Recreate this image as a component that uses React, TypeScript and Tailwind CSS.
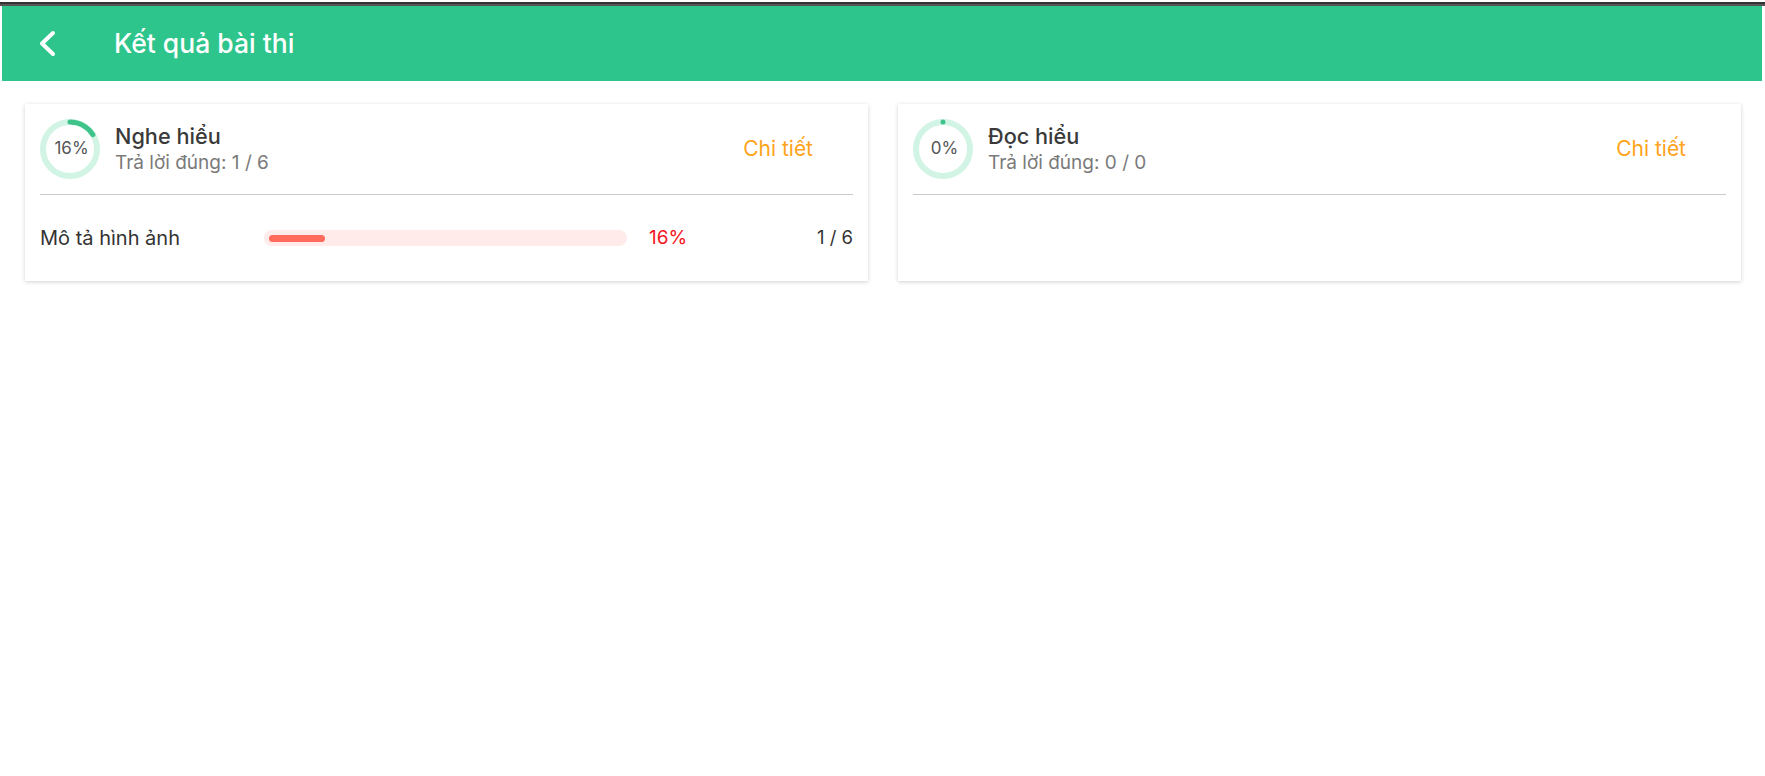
interface Part {
    title: string
    correct: number
    total: number
    rows: { label: string; correct: number; total: number }[]
}

const parts: Part[] = [
    {
        title: 'Nghe hiểu',
        correct: 1,
        total: 6,
        rows: [{ label: 'Mô tả hình ảnh', correct: 1, total: 6 }],
    },
    { title: 'Đọc hiểu', correct: 0, total: 0, rows: [] },
]

function percent(correct: number, total: number) {
    return total ? Math.floor((correct / total) * 100) : 0
}

function Ring({ value }: { value: number }) {
    const r = 27
    const c = 2 * Math.PI * r
    return (
        <div className="relative w-[60px] h-[60px] shrink-0">
            <svg width="60" height="60" viewBox="0 0 60 60" className="-rotate-90">
                <circle cx="30" cy="30" r={r} fill="none" stroke="#d2f4e5" strokeWidth="6" />
                <circle
                    cx="30"
                    cy="30"
                    r={r}
                    fill="none"
                    stroke="#3ec48b"
                    strokeWidth="5"
                    strokeLinecap="round"
                    strokeDasharray={`${(value / 100) * c} ${c}`}
                />
            </svg>
            <span className="absolute inset-0 pl-[3px] flex items-center justify-center text-[17px] text-[#555]">
                {value}%
            </span>
        </div>
    )
}

function PartCard({ part }: { part: Part }) {
    const value = percent(part.correct, part.total)
    return (
        <div className="bg-white px-[15px] shadow-[0_1px_4px_rgba(0,0,0,0.18)]">
            <div className="flex items-center pt-[15px] pb-[15px] border-b border-[#cacaca]">
                <Ring value={value} />
                <div className="ml-[15px] flex-1">
                    <div className="text-[21.7px] leading-[28px] font-medium text-[#3a3a3a]">{part.title}</div>
                    <div className="text-[19px] leading-[26px] text-[#7a7a7a]">
                        Trả lời đúng: {part.correct} / {part.total}
                    </div>
                </div>
                <button className="mr-[40px] text-[21px] text-[#ffa31a]">Chi tiết</button>
            </div>

            {part.rows.map((row) => {
                const p = percent(row.correct, row.total)
                return (
                    <div key={row.label} className="flex items-center h-[86px]">
                        <div className="w-[224px] text-[20px] text-[#333]">{row.label}</div>
                        <div className="w-[363px] h-[16px] rounded-full bg-[#ffecea] p-[4.5px]">
                            <div
                                className="h-full rounded-full bg-[#ff6a5c]"
                                style={{ width: `${p}%` }}
                            />
                        </div>
                        <div className="ml-[22px] text-[19px] text-[#f5141c]">{p}%</div>
                        <div className="flex-1 text-right text-[18.5px] text-[#333]">
                            {row.correct} / {row.total}
                        </div>
                    </div>
                )
            })}
        </div>
    )
}

export default function App() {
    return (
        <div className="min-h-screen bg-white font-['Inter',sans-serif]">
            <div className="pt-[2px]">
                <div className="h-[2px] bg-[#333]" />
                <div className="h-[2px] bg-[#555]" />
            </div>
            <div className="pl-[2px] pr-[3px]">
                <header className="h-[75px] bg-[#2dc58b] flex items-center text-white">
                    <svg width="19" height="27" viewBox="0 0 19 27" className="ml-[36px]">
                        <polyline
                            points="15,3 4,13.5 15,24"
                            fill="none"
                            stroke="white"
                            strokeWidth="4"
                            strokeLinecap="round"
                            strokeLinejoin="round"
                        />
                    </svg>
                    <h1 className="ml-[57px] text-[26.5px] font-medium">Kết quả bài thi</h1>
                </header>
            </div>

            <div className="grid grid-cols-2 gap-[30px] pt-[23px] pl-[25px] pr-[24px] items-stretch">
                {parts.map((p) => (
                    <PartCard key={p.title} part={p} />
                ))}
            </div>
        </div>
    )
}
